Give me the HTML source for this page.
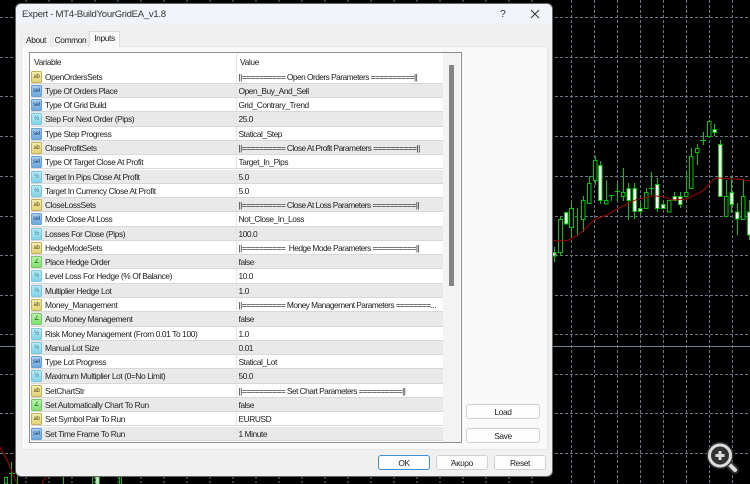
<!DOCTYPE html>
<html><head><meta charset="utf-8">
<style>
html,body{margin:0;padding:0;background:#000}
body{width:750px;height:484px;overflow:hidden;position:relative;font-family:"Liberation Sans",sans-serif;color:#222;font-size:8.4px;letter-spacing:-.38px}
.abs{position:absolute}
#chart{position:absolute;left:0;top:0}
#dlg{position:absolute;left:16px;top:4px;width:536px;height:472px;background:#f0f0f0;border-radius:5px;box-shadow:0 0 0 1px #666}
#tb{position:absolute;left:0;top:0;width:536px;height:22px;background:linear-gradient(#f1f5fa,#eff3f8);border-radius:5px 5px 0 0}
.t{position:absolute;white-space:nowrap}
#panel{position:absolute;left:5px;top:42px;width:527px;height:404px;background:#f9f9f9;border:1px solid #e6e6e6;box-sizing:border-box}
.tab{position:absolute;top:29px;height:14px;line-height:12px;text-align:center;background:#f0f0f0;border:1px solid #e8e8e8;border-bottom:0;box-sizing:border-box;font-size:8.4px}
#list{position:absolute;left:29px;top:52px;width:433px;height:391px;background:#fff;border:1.5px solid #8f8f8f;box-sizing:border-box;overflow:hidden}
#hd{position:absolute;left:0;top:0;width:412px;height:17px;filter:blur(.2px)}
#sb{position:absolute;left:413px;top:0;width:17px;height:390px;background:#f3f3f3}
#th{position:absolute;left:6px;top:12px;width:5px;height:221px;background:#858585}
.r{position:absolute;left:1px;width:412px;height:14.28px;box-sizing:border-box;border-bottom:1px solid #d8d8d8;line-height:13.5px;background:#fff;white-space:nowrap;overflow:hidden}
.r.g{background:#e9e9e9}
.r b{font-weight:normal;position:absolute;left:14px;top:1px;letter-spacing:-.4px;filter:blur(.2px)}
.r i{font-style:normal;position:absolute;left:207.5px;top:1px;width:204px;overflow:hidden;letter-spacing:-.45px;filter:blur(.2px)}
.r i.s{letter-spacing:-.55px}
.r u{position:absolute;left:205px;top:0;width:1px;height:14px;background:#e6e6e6}
.ic{position:absolute;left:0;top:1px;width:9px;height:10px;border-radius:1.5px;font-size:6px;line-height:11px;text-align:center;border:1px solid;letter-spacing:-.3px}
.y{background:linear-gradient(#f4eeb0,#e2d377);border-color:#c2b25c;color:#5c5020}
.b{background:linear-gradient(#a6cdf0,#6ea6dc);border-color:#6a9fd2;color:#1d3f72}
.c{background:linear-gradient(#bdeaf5,#82d3e8);border-color:#7cc6dc;color:#20708c}
.l{background:linear-gradient(#b6f2a8,#7fdf72);border-color:#7ac86c;color:#165a12}
.btn{position:absolute;height:15px;line-height:14px;text-align:center;background:#fdfdfd;border:1px solid #d0d0d0;border-radius:3px;box-sizing:border-box;font-size:8.4px}
</style></head><body>
<svg id="chart" width="750" height="484" viewBox="0 0 750 484">
<g stroke="#6a7786" stroke-width="1" stroke-dasharray="3 2" fill="none">
<path d="M0 17.5H750M0 57.5H750M0 96.5H750M0 136.5H750M0 176.5H750M0 216.5H750M0 255.5H750M0 295.5H750M0 334.5H750M0 374.5H750M0 413.5H750M0 453.5H750"/>
<path d="M571.5 0V484M594.5 0V484M617.5 0V484M640.5 0V484M663.5 0V484M686.5 0V484M709.5 0V484M732.5 0V484"/>
</g>
<path d="M0 346.5H750" stroke="#6d8090" stroke-width="1"/>
<path d="M26 477V484M49 477V484M72 477V484M95 477V484M118 477V484M141 477V484M164 477V484M187 477V484M210 477V484M233 477V484M256 477V484M279 477V484M302 477V484M325 477V484M348 477V484M371 477V484M394 477V484M417 477V484M440 477V484M463 477V484M486 477V484M509 477V484M532 477V484M26 0V4M49 0V4M72 0V4M95 0V4M118 0V4M141 0V4M164 0V4M187 0V4M210 0V4M233 0V4M256 0V4M279 0V4M302 0V4M325 0V4M348 0V4M371 0V4M394 0V4M417 0V4M440 0V4M463 0V4M486 0V4M509 0V4M532 0V4" stroke="#6a7786" stroke-dasharray="2 2"/>
<g stroke="#00c800" stroke-width="1" fill="none">
<path d="M554.5 247V262M560.5 216V256M571.5 203V238M577.5 208V236M583.5 196V232M589.5 176V204M595.5 156V185M600.5 161V204M606.5 180V204M611.5 195V201M609 195.5H614M617.5 183V201M615 191.5H620M623.5 168V201M628.5 183V220M634.5 183V219M640.5 202V215M646.5 188V208M651.5 172V195M649 188.5H654M657.5 178V212M663.5 200V209M674.5 192V200M680.5 192V208M686.5 172V196M691.5 148V188M697.5 144V165M703.5 132V145M700 140.5H706M709.5 120V136M714.5 124V136M720.5 140V196M726.5 180V216M731.5 177V213M737.5 203V235M743.5 179V219M749.5 200V240"/>
<path d="M11.5 462V484M9 473.5H15M17.5 476V484M63.5 477V484M92.5 477V484M119.5 477V484M121.5 477V484"/>
<path d="M4.5 477.5h3V484h-3z"/>
<path d="M96 477h3v7h-3z" fill="#cfeccf" stroke="#7fd87f"/>
<g fill="#000">
<rect x="558.5" y="219.5" width="4" height="33"/><rect x="569.5" y="208.5" width="4" height="19"/><rect x="581.5" y="200.5" width="3.5" height="19"/><rect x="587.5" y="183.5" width="3.5" height="20"/><rect x="593.5" y="160.5" width="3.5" height="20"/><rect x="604.5" y="200.5" width="3.5" height="3.5"/><rect x="621.5" y="192.5" width="3.5" height="4"/><rect x="644.5" y="192.5" width="3.5" height="16"/><rect x="667.5" y="200.5" width="3.5" height="11.5"/><rect x="684.5" y="192.5" width="3.5" height="4"/><rect x="689.5" y="156.5" width="3.5" height="32"/><rect x="695.5" y="148.5" width="3.5" height="4"/><rect x="707.5" y="121.5" width="3.5" height="15"/><rect x="724.5" y="196.5" width="3.5" height="20"/><rect x="741.5" y="196.5" width="3.5" height="23"/>
</g>
<g fill="#fff">
<rect x="552.5" y="252.5" width="3.5" height="3.5" fill="#ccc"/><rect x="564.5" y="212.5" width="3.5" height="11.5"/><rect x="598.5" y="165.5" width="3.5" height="35"/><rect x="627" y="188.5" width="3.5" height="12"/><rect x="633" y="188.5" width="3.5" height="23"/><rect x="638.5" y="208.5" width="3.5" height="3"/><rect x="655.5" y="184.5" width="3.5" height="24"/><rect x="661.5" y="204.5" width="3.5" height="4"/><rect x="673" y="196.5" width="3.5" height="4"/><rect x="678.5" y="196.5" width="3.5" height="8"/><rect x="713" y="129.5" width="3.5" height="3"/><rect x="718.5" y="144.5" width="3.5" height="52"/><rect x="730" y="192.5" width="3.5" height="12"/><rect x="735.5" y="212" width="3.5" height="7"/><rect x="747.5" y="212" width="4" height="23"/>
</g>
</g>
<polyline fill="none" stroke="#a80000" stroke-width="1" points="552,240 558,241.3 568,240.3 575,236.7 583,231 595,219 607,215 617,209.3 628,203.3 637,199.3 647,197.3 653,195.7 663,196.7 673,200 687,199 703,190.7 710,183.3 715,178.3 722,178 733,179 740,179.3 750,181"/>
<polyline fill="none" stroke="#b00000" stroke-width="1" points="0,447 8,462 17,484"/>
<path d="M42 484L46 476" stroke="#b00000"/>
<g fill="none" stroke-linecap="round">
<path d="M729 464L735 470" stroke="#333" stroke-width="8"/>
<path d="M729 464L735 470" stroke="#ddd" stroke-width="4"/>
<circle cx="720" cy="455.5" r="11" fill="#333" stroke="#333" stroke-width="5"/>
<circle cx="720" cy="455.5" r="10.5" stroke="#ddd" stroke-width="3"/>
<path d="M720 451V460M715.5 455.5H724.5" stroke="#ddd" stroke-width="3" stroke-linecap="butt"/>
</g>
</svg>

<div id="dlg">
<div id="tb"></div>
<div class="t" style="left:6px;top:5px;font-size:9.6px;line-height:12px;color:#333;letter-spacing:-.3px;filter:blur(.2px)">Expert - MT4-BuildYourGridEA_v1.8</div>
<div class="t" style="left:484px;top:4px;font-size:10.5px;line-height:13px;color:#333">?</div>
<svg class="abs" style="left:514px;top:5px" width="10" height="10"><path d="M1 1L9 9M9 1L1 9" stroke="#333" stroke-width="1"/></svg>
<div id="panel"></div>
<div class="tab" style="left:5px;width:30px">About</div>
<div class="tab" style="left:36px;width:37px">Common</div>
<div class="tab" style="left:73px;top:27px;width:31px;height:16px;line-height:13px;background:#f9f9f9;border-color:#ddd;z-index:2">Inputs</div>
</div>

<div id="list">
<div id="hd"><span class="t" style="left:4px;top:4px">Variable</span><span class="t" style="left:210px;top:4px">Value</span><span class="abs" style="left:206px;top:0;width:1px;height:17px;background:#e5e5e5"></span></div>
<div id="sb"><div id="th"></div></div>
<div class="r" style="top:16.5px"><span class="ic y">ab</span><b>OpenOrdersSets</b><u></u><i class="s">||========== Open Orders Parameters ==========||</i></div>
<div class="r g" style="top:30.8px"><span class="ic b">sel</span><b>Type Of Orders Place</b><u></u><i>Open_Buy_And_Sell</i></div>
<div class="r" style="top:45.1px"><span class="ic b">sel</span><b>Type Of Grid Build</b><u></u><i>Grid_Contrary_Trend</i></div>
<div class="r g" style="top:59.3px"><span class="ic c">½</span><b>Step For Next Order (Pips)</b><u></u><i>25.0</i></div>
<div class="r" style="top:73.6px"><span class="ic b">sel</span><b>Type Step Progress</b><u></u><i>Statical_Step</i></div>
<div class="r g" style="top:87.9px"><span class="ic y">ab</span><b>CloseProfitSets</b><u></u><i class="s">||========== Close At Profit Parameters ==========||</i></div>
<div class="r" style="top:102.2px"><span class="ic b">sel</span><b>Type Of Target Close At Profit</b><u></u><i>Target_In_Pips</i></div>
<div class="r g" style="top:116.5px"><span class="ic c">½</span><b>Target In Pips Close At Profit</b><u></u><i>5.0</i></div>
<div class="r" style="top:130.7px"><span class="ic c">½</span><b>Target In Currency Close At Profit</b><u></u><i>5.0</i></div>
<div class="r g" style="top:145px"><span class="ic y">ab</span><b>CloseLossSets</b><u></u><i class="s">||========== Close At Loss Parameters ==========||</i></div>
<div class="r" style="top:159.3px"><span class="ic b">sel</span><b>Mode Close At Loss</b><u></u><i>Not_Close_In_Loss</i></div>
<div class="r g" style="top:173.6px"><span class="ic c">½</span><b>Losses For Close (Pips)</b><u></u><i>100.0</i></div>
<div class="r" style="top:187.9px"><span class="ic y">ab</span><b>HedgeModeSets</b><u></u><i class="s">||==========&nbsp; Hedge Mode Parameters ==========||</i></div>
<div class="r g" style="top:202.1px"><span class="ic l">∠</span><b>Place Hedge Order</b><u></u><i>false</i></div>
<div class="r" style="top:216.4px"><span class="ic c">½</span><b>Level Loss For Hedge (% Of Balance)</b><u></u><i>10.0</i></div>
<div class="r g" style="top:230.7px"><span class="ic c">½</span><b>Multiplier Hedge Lot</b><u></u><i>1.0</i></div>
<div class="r" style="top:245px"><span class="ic y">ab</span><b>Money_Management</b><u></u><i class="s">||========== Money Management Parameters ========...</i></div>
<div class="r g" style="top:259.3px"><span class="ic l">∠</span><b>Auto Money Management</b><u></u><i>false</i></div>
<div class="r" style="top:273.5px"><span class="ic c">½</span><b>Risk Money Management (From 0.01 To 100)</b><u></u><i>1.0</i></div>
<div class="r g" style="top:287.8px"><span class="ic c">½</span><b>Manual Lot Size</b><u></u><i>0.01</i></div>
<div class="r" style="top:302.1px"><span class="ic b">sel</span><b>Type Lot Progress</b><u></u><i>Statical_Lot</i></div>
<div class="r g" style="top:316.4px"><span class="ic c">½</span><b>Maximum Multiplier Lot (0=No Limit)</b><u></u><i>50.0</i></div>
<div class="r" style="top:330.7px"><span class="ic y">ab</span><b>SetChartStr</b><u></u><i class="s">||========== Set Chart Parameters ==========||</i></div>
<div class="r g" style="top:344.9px"><span class="ic l">∠</span><b>Set Automatically Chart To Run</b><u></u><i>false</i></div>
<div class="r" style="top:359.2px"><span class="ic y">ab</span><b>Set Symbol Pair To Run</b><u></u><i>EURUSD</i></div>
<div class="r g" style="top:373.5px"><span class="ic b">sel</span><b>Set Time Frame To Run</b><u></u><i>1 Minute</i></div>
</div>

<div class="btn" style="left:466px;top:404px;width:74px">Load</div>
<div class="btn" style="left:466px;top:428px;width:74px">Save</div>
<div class="btn" style="left:378px;top:455px;width:52px;border-color:#3f8fd0">OK</div>
<div class="btn" style="left:436px;top:455px;width:52px">Άκυρο</div>
<div class="btn" style="left:494px;top:455px;width:52px">Reset</div>
</body></html>
